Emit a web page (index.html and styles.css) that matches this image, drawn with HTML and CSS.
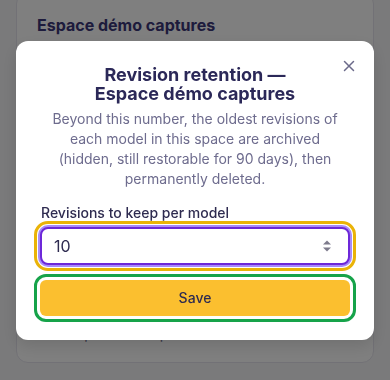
FILE: index.html
```html
<!DOCTYPE html>
<html lang="en">
<head>
<meta charset="utf-8">
<title>Revision retention</title>
<link rel="stylesheet" href="styles.css">
</head>
<body>
<div class="page">
  <section class="card">
    <h2 class="card-title">Espace démo captures</h2>
    <div class="card-body">
      <p class="card-text">Revisions kept per model: 10. Older revisions are archived for 90 days.</p>
      <div class="card-row"><span class="row-icon"></span><span>Keep revisions per model</span></div>
    </div>
  </section>
</div>
<div class="overlay">
  <div class="modal" role="dialog" aria-modal="true">
    <button class="close" type="button" aria-label="Close">
      <svg width="12" height="12" viewBox="0 0 12 12" fill="none" stroke="currentColor" stroke-width="1.5" stroke-linecap="round"><path d="M1.5 1.5l9 9M10.5 1.5l-9 9"/></svg>
    </button>
    <h3 class="modal-title"><span class="title-line">Revision retention —</span><span class="title-line">Espace démo captures</span></h3>
    <p class="modal-desc">Beyond this number, the oldest revisions of each model in this space are archived (hidden, still restorable for 90 days), then permanently deleted.</p>
    <label class="field-label" for="keep">Revisions to keep per model</label>
    <div class="field">
      <input class="field-input" id="keep" type="number" value="10" min="1">
      <span class="spin" aria-hidden="true">
        <svg width="10" height="14" viewBox="0 0 10 14"><path d="M5 1.5L9 5.5H1z" fill="#7d7b8c"/><path d="M5 12.5L9 8.5H1z" fill="#7d7b8c"/></svg>
      </span>
    </div>
    <button class="save" type="button">Save</button>
  </div>
</div>
</body>
</html>
```
FILE: styles.css
```css
* { box-sizing: border-box; }
html, body { margin: 0; padding: 0; }
body {
  font-family: Inter, "Noto Sans", "Liberation Sans", sans-serif;
  background: #f5f5f7;
  color: #2b2858;
  height: 380px;
  overflow: hidden;
}
.page { padding: 0 16px; }
.card {
  margin-top: -8px;
  background: #fff;
  border: 1px solid #e4e3ec;
  border-radius: 12px;
  padding: 20px;
  height: 371px;
  display: flex;
  flex-direction: column;
}
.card-title {
  margin: 0;
  font-size: 16px;
  line-height: 24px;
  font-weight: 700;
  color: #3b3678;
}
.card-body { flex: 1; display: flex; flex-direction: column; justify-content: space-between; }
.card-text { margin: 12px 0 0; font-size: 14px; color: #6b6a8a; }
.card-row { display: flex; align-items: flex-start; gap: 8px; font-size: 14px; line-height: 16px; color: #6b6a8a; padding-left: 4px; }
.row-icon { width: 10px; height: 10px; border: 2px solid #4c3fc0; border-radius: 2px; }

.overlay {
  position: fixed;
  inset: 0;
  background: rgba(0, 0, 0, 0.5);
  display: flex;
  align-items: center;
  justify-content: center;
  padding: 16px;
}
.modal {
  position: relative;
  width: 100%;
  max-width: 448px;
  background: #fff;
  border-radius: 12px;
  padding: 24px;
  display: flex;
  flex-direction: column;
  box-shadow: 0 6px 16px rgba(0, 0, 0, 0.12);
}
.close {
  position: absolute;
  top: 13px;
  right: 13px;
  width: 24px;
  height: 24px;
  padding: 0;
  border: 0;
  background: transparent;
  color: #6b6a8a;
  display: flex;
  align-items: center;
  justify-content: center;
}
.modal-title {
  margin: 0;
  text-align: center;
  font-size: 18px;
  line-height: 19px;
  font-weight: 700;
  color: #2b2858;
}
.title-line { display: block; }
.modal-desc {
  margin: 6px 0 0;
  padding: 0 9px;
  text-align: center;
  font-size: 14px;
  line-height: 20px;
  color: #6e6c8e;
}
.field-label {
  margin-top: 14px;
  padding-left: 1px;
  font-size: 14px;
  line-height: 20px;
  font-weight: 500;
  color: #2e2b50;
}
.field {
  position: relative;
  margin-top: 4px;
}
.field-input {
  display: block;
  height: 38px;
  width: 100%;
  border: 2px solid #6d28d9;
  border-radius: 8px;
  padding: 0 36px 0 12px;
  font-family: inherit;
  font-size: 16px;
  color: #2e2b50;
  background: #fff;
  box-shadow: 0 0 0 2px #a78bfa;
  outline: 3px solid #eab308;
  outline-offset: 3px;
  -moz-appearance: textfield;
  appearance: textfield;
}
.field-input::-webkit-inner-spin-button,
.field-input::-webkit-outer-spin-button { -webkit-appearance: none; margin: 0; }
.spin {
  position: absolute;
  top: 12px;
  right: 18px;
  width: 10px;
  height: 14px;
  display: flex;
}
.save {
  margin-top: 15px;
  height: 36px;
  border: 0;
  border-radius: 6px;
  background: #fbbf2f;
  font-family: inherit;
  font-size: 14px;
  font-weight: 500;
  color: #2e2b50;
  outline: 3px solid #16a34a;
  outline-offset: 3px;
}
```
